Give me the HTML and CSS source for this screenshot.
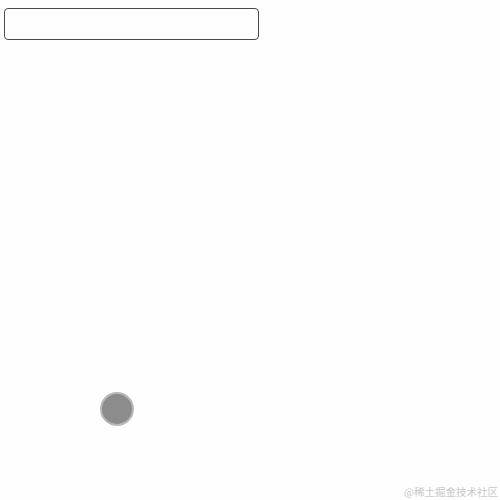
FILE: index.html
```html
<!DOCTYPE html>
<html>
<head>
<meta charset="utf-8">
<link rel="stylesheet" href="styles.css">
</head>
<body>
<div class="page">
  <input class="field" type="text">
</div>
<div class="dot"></div>
<div class="mark">@稀土掘金技术社区</div>
</body>
</html>
```
FILE: styles.css
```css
html, body {
  margin: 0;
  padding: 0;
  background: #fefefe;
  width: 500px;
  height: 500px;
  overflow: hidden;
}
.page {
  padding: 8px 4px;
}
.field {
  display: block;
  box-sizing: border-box;
  width: 255px;
  height: 32px;
  margin: 0;
  border: 1px solid #4a4a4a;
  border-radius: 4px;
  background: #fefefe;
  outline: none;
}
.dot {
  position: absolute;
  left: 100px;
  top: 392px;
  width: 34px;
  height: 34px;
  box-sizing: border-box;
  border-radius: 50%;
  background: #8c8c8c;
  border: 2px solid #b8b8b8;
}
.mark {
  position: absolute;
  right: 2px;
  bottom: 2px;
  font-family: "Noto Sans CJK SC", sans-serif;
  font-size: 10.5px;
  line-height: 13px;
  color: #c8c8c8;
  white-space: nowrap;
}
```
